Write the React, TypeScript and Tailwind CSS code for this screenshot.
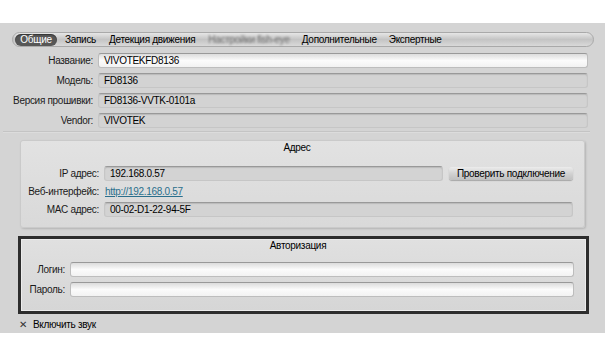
import React from "react";

const ro =
  "h-[15px] rounded-[3px] border border-[#c6c6c6] border-t-[#999999] bg-[#d3d3d3] shadow-[inset_0_1px_1px_rgba(0,0,0,0.12)] flex items-center pl-[5px] text-black";
const edit =
  "h-[15px] rounded-[3px] border border-[#bdbdbd] border-t-[#999999] bg-gradient-to-b from-[#dcdcdc] via-[#fbfbfb] to-[#f2f2f2] flex items-center pl-[5px] text-black";

function Row({ label, children }: { label: string; children: React.ReactNode }) {
  return (
    <div className="flex items-center">
      <div className="w-[93px] text-right text-[#1a1a1a] leading-[15px]">{label}</div>
      <div className="ml-[5px] flex-1">{children}</div>
    </div>
  );
}

export default function App() {
  return (
    <div className="w-[605px] h-[358px] bg-white font-['Liberation_Sans',Arial,sans-serif] text-[10px] tracking-[-0.3px] whitespace-nowrap overflow-hidden">
      <div className="mt-[23px] h-[310px] bg-[#d4d4d4] pt-[9px]">
        {/* Tab bar */}
        <div className="ml-[12px] w-[582px] h-[15px] rounded-full border border-[#a9a9a9] bg-gradient-to-b from-[#e6e6e6] via-[#c4c4c4] to-[#d9d9d9] flex items-center pl-[2px]">
          <div className="h-[12px] w-[42px] rounded-full bg-[#575757] text-white flex items-center justify-center leading-[12px] shadow-[inset_0_1px_1px_rgba(0,0,0,0.4)]">
            Общие
          </div>
          <div className="ml-[8px] text-black leading-[12px]">Запись</div>
          <div className="ml-[13px] text-black leading-[12px]">Детекция движения</div>
          <div className="ml-[13px] text-[#6f6f6f] leading-[12px] blur-[1px]">Настройки fish-eye</div>
          <div className="ml-[12px] text-black leading-[12px]">Дополнительные</div>
          <div className="ml-[12px] text-black leading-[12px]">Экспертные</div>
        </div>

        {/* General rows */}
        <div className="mt-[6px] pr-[17px] flex flex-col gap-[5px]">
          <Row label="Название:">
            <div className={edit}>VIVOTEKFD8136</div>
          </Row>
          <Row label="Модель:">
            <div className={ro}>FD8136</div>
          </Row>
          <Row label="Версия прошивки:">
            <div className={ro}>FD8136-VVTK-0101a</div>
          </Row>
          <Row label="Vendor:">
            <div className={ro}>VIVOTEK</div>
          </Row>
        </div>

        <div className="mt-[3px] mx-[3px] w-[587px] border-b border-[#c4c4c4] shadow-[0_1px_0_#dcdcdc]" />

        {/* Address group */}
        <div className="mt-[8px] ml-[20px] w-[565px] h-[88px] rounded-[3px] border border-[#cacaca] bg-gradient-to-b from-[#e2e2e2] to-[#d9d9d9] shadow-[1px_1px_2px_rgba(0,0,0,0.15)] pt-[1px] pr-[11px]">
          <div className="text-center text-black leading-[12px]">Адрес</div>
          <div className="mt-[12px] flex flex-col gap-[3px]">
            <div className="flex items-center">
              <div className="w-[78px] text-right text-[#1a1a1a] leading-[15px]">IP адрес:</div>
              <div className={ro + " ml-[5px] w-[339px]"}>192.168.0.57</div>
              <div className="ml-[6px] w-[124px] h-[13px] rounded-[3px] bg-gradient-to-b from-[#ececec] via-[#d2d2d2] to-[#bfbfbf] shadow-[0_1px_1px_rgba(0,0,0,0.25)] flex items-center justify-center text-black leading-[13px]">
                Проверить подключение
              </div>
            </div>
            <div className="flex items-center">
              <div className="w-[78px] text-right text-[#1a1a1a] leading-[15px]">Веб-интерфейс:</div>
              <div className="ml-[6px] text-[#2a6f8c] underline leading-[15px]">http://192.168.0.57</div>
            </div>
            <div className="flex items-center">
              <div className="w-[78px] text-right text-[#1a1a1a] leading-[15px]">MAC адрес:</div>
              <div className={ro + " ml-[5px] flex-1"}>00-02-D1-22-94-5F</div>
            </div>
          </div>
        </div>

        {/* Auth group */}
        <div className="mt-[8px] ml-[18px] w-[571px] h-[78px] border-[3px] border-[#2d2d2d] bg-[#d8d8d8]">
          <div className="h-full border border-[#ececec] bg-gradient-to-b from-[#e0e0e0] to-[#d6d6d6] pr-[11px]">
            <div className="text-center text-black leading-[11px]">Авторизация</div>
            <div className="mt-[11px] flex flex-col gap-[5px]">
              <div className="flex items-center">
                <div className="w-[43px] text-right text-[#1a1a1a] leading-[15px]">Логин:</div>
                <div className={edit + " ml-[5px] flex-1"}></div>
              </div>
              <div className="flex items-center">
                <div className="w-[43px] text-right text-[#1a1a1a] leading-[15px]">Пароль:</div>
                <div className={edit + " ml-[5px] flex-1"}></div>
              </div>
            </div>
          </div>
        </div>

        {/* Checkbox */}
        <div className="mt-[4px] ml-[19px] flex items-center leading-[14px]">
          <span className="w-[9px] text-[#333] text-[10px] leading-[14px]">✕</span>
          <span className="ml-[5px] text-black">Включить звук</span>
        </div>
      </div>
    </div>
  );
}
